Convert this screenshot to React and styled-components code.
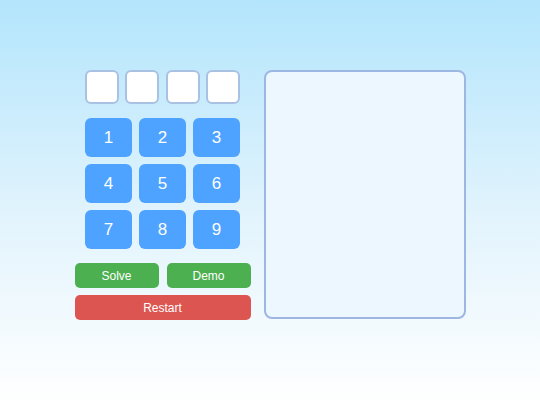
import React from "react";
import styled, { createGlobalStyle } from "styled-components";

const Global = createGlobalStyle`
  html, body { margin: 0; padding: 0; height: 100%; }
  body {
    font-family: "Liberation Sans", Arial, sans-serif;
    background: linear-gradient(to bottom, #b3e5fc 0%, #e3f4fd 55%, #ffffff 100%);
    min-height: 405px;
  }
`;

const Page = styled.div`
  display: flex;
  justify-content: center;
  align-items: flex-start;
  gap: 13px;
  padding-top: 70px;
  box-sizing: border-box;
  width: 540px;
  height: 405px;
`;

const Controls = styled.div`
  width: 176px;
  display: flex;
  flex-direction: column;
  align-items: center;
`;

const Slots = styled.div`
  width: 155px;
  display: flex;
  justify-content: space-between;
  margin-bottom: 14px;
`;

const Slot = styled.div`
  width: 34px;
  height: 34px;
  box-sizing: border-box;
  background: #ffffff;
  border: 2px solid #a9c1e2;
  border-radius: 6px;
`;

const Keypad = styled.div`
  display: grid;
  grid-template-columns: repeat(3, 47px);
  grid-auto-rows: 39px;
  gap: 7px;
  margin-bottom: 14px;
`;

const Key = styled.button`
  border: none;
  border-radius: 6px;
  background: #4da3ff;
  color: #ffffff;
  font-family: "Liberation Sans", Arial, sans-serif;
  font-size: 17px;
  padding: 0;
  cursor: pointer;
`;

const ActionRow = styled.div`
  width: 176px;
  display: grid;
  grid-template-columns: 1fr 1fr;
  gap: 8px;
  margin-bottom: 7px;
`;

const Action = styled.button`
  height: 25px;
  border: none;
  border-radius: 5px;
  background: ${(p) => (p.$danger ? "#dc5550" : "#4caf50")};
  color: #ffffff;
  font-family: "Liberation Sans", Arial, sans-serif;
  font-size: 12px;
  padding: 0;
  width: 100%;
  cursor: pointer;
`;

const Panel = styled.div`
  width: 202px;
  height: 249px;
  box-sizing: border-box;
  border: 2px solid #9db7e2;
  border-radius: 8px;
  background: #edf7ff;
`;

export default function App() {
  return (
    <>
      <Global />
      <Page>
        <Controls>
          <Slots>
            {[0, 1, 2, 3].map((i) => (
              <Slot key={i} />
            ))}
          </Slots>
          <Keypad>
            {[1, 2, 3, 4, 5, 6, 7, 8, 9].map((n) => (
              <Key key={n}>{n}</Key>
            ))}
          </Keypad>
          <ActionRow>
            <Action>Solve</Action>
            <Action>Demo</Action>
          </ActionRow>
          <Action $danger>Restart</Action>
        </Controls>
        <Panel />
      </Page>
    </>
  );
}
